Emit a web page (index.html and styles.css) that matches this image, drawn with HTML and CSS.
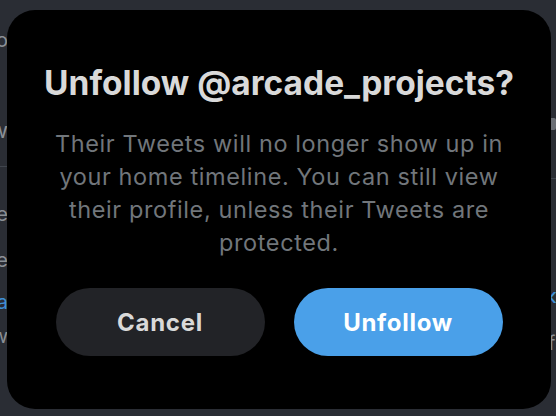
FILE: index.html
```html
<!DOCTYPE html>
<html lang="en">
<head>
<meta charset="utf-8">
<title>Unfollow</title>
<link rel="stylesheet" href="styles.css">
</head>
<body>
<div class="page">
  <div class="side side-left">
    <div class="frag f1">Repo</div>
    <div class="frag f2">New</div>
    <div class="rule"></div>
    <div class="frag f3">Update</div>
    <div class="frag f4">Tweete</div>
    <div class="frag f5 link">@arca</div>
    <div class="frag f6">View</div>
  </div>
  <div class="side side-right">
    <div class="thumb"></div>
    <div class="rule"></div>
    <div class="frag r1 link">&lsaquo;</div>
    <div class="frag r2">f</div>
  </div>
</div>

<div class="overlay">
  <div class="dialog" role="dialog" aria-labelledby="dlg-title">
    <h1 id="dlg-title" class="dialog-title">Unfollow @arcade_projects?</h1>
    <p class="dialog-text">Their Tweets will no longer show up in your home timeline. You can still view their profile, unless their Tweets are protected.</p>
    <div class="dialog-actions">
      <button class="btn btn-cancel">Cancel</button>
      <button class="btn btn-primary">Unfollow</button>
    </div>
  </div>
</div>
</body>
</html>
```

FILE: styles.css
```css
* { box-sizing: border-box; }

html, body {
  margin: 0;
  padding: 0;
  width: 556px;
  height: 416px;
  overflow: hidden;
}

body {
  background: #2a2d34;
  font-family: Inter, "Noto Sans", "Liberation Sans", sans-serif;
}

.page {
  display: flex;
  justify-content: space-between;
  height: 416px;
}

.side {
  display: flex;
  flex-direction: column;
  width: 60px;
  color: #8b9096;
  font-size: 20px;
  line-height: 24px;
}

.side-left {
  margin-left: -52px;
  align-items: flex-end;
  padding-top: 28px;
}

.side-right {
  margin-right: -52px;
  align-items: flex-start;
  padding-top: 118px;
}

.frag { white-space: nowrap; }
.link { color: #3f8fd6; }

.side-left .rule,
.side-right .rule {
  width: 60px;
  height: 1px;
  background: #40454d;
}

.f1 { margin-bottom: 66px; }
.f2 { margin-bottom: 24px; font-size: 22px; }
.side-left .rule { margin-bottom: 35px; }
.f3 { margin-bottom: 22px; }
.f4 { margin-bottom: 18px; }
.f5 { margin-bottom: 10px; }

.thumb {
  width: 8px;
  height: 12px;
  background: #6b6f75;
  border-radius: 2px;
  margin-bottom: 48px;
}
.side-right .rule { margin-bottom: 106px; }
.r1 { margin-bottom: 22px; font-size: 24px; }

.overlay {
  position: fixed;
  inset: 0;
  display: flex;
  align-items: flex-start;
  justify-content: flex-start;
  padding: 10px 0 0 7px;
}

.dialog {
  width: 544px;
  height: 399px;
  background: #000;
  border-radius: 28px;
  padding: 53px 0 0;
  display: flex;
  flex-direction: column;
  align-items: center;
}

.dialog-title {
  margin: 0;
  font-size: 33.5px;
  line-height: 40px;
  font-weight: 700;
  color: #d9d9d9;
  letter-spacing: 0;
  white-space: nowrap;
  text-align: center;
}

.dialog-text {
  margin: 24px 0 0;
  width: 470px;
  font-size: 23.5px;
  line-height: 33px;
  letter-spacing: 0.6px;
  color: #71767b;
  text-align: center;
}

.dialog-actions {
  margin-top: 29px;
  display: flex;
  gap: 29px;
}

.btn {
  width: 209px;
  height: 68px;
  border: 0;
  border-radius: 34px;
  font-family: inherit;
  font-size: 24px;
  font-weight: 700;
  letter-spacing: 0.7px;
  cursor: pointer;
}

.btn-cancel {
  background: #222327;
  color: #d9d9d9;
}

.btn-primary {
  background: #4aa0e9;
  color: #ffffff;
}
```
